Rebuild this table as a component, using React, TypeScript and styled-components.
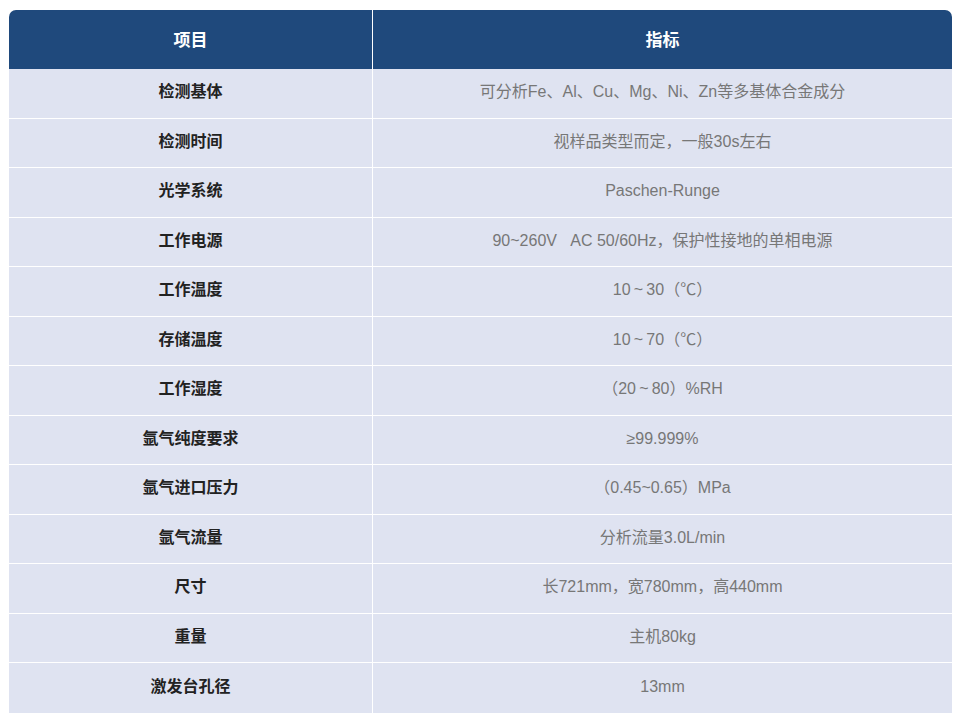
import React from "react";
import styled, { createGlobalStyle } from "styled-components";

const rows: [string, string][] = [
    ["检测基体", "可分析Fe、Al、Cu、Mg、Ni、Zn等多基体合金成分"],
    ["检测时间", "视样品类型而定，一般30s左右"],
    ["光学系统", "Paschen-Runge"],
    ["工作电源", "90~260V\u00a0\u00a0\u00a0AC 50/60Hz，保护性接地的单相电源"],
    ["工作温度", "10\u2009~\u200930（℃）"],
    ["存储温度", "10\u2009~\u200970（℃）"],
    ["工作湿度", "（20\u2009~\u200980）%RH"],
    ["氩气纯度要求", "≥99.999%"],
    ["氩气进口压力", "（0.45~0.65）MPa"],
    ["氩气流量", "分析流量3.0L/min"],
    ["尺寸", "长721mm，宽780mm，高440mm"],
    ["重量", "主机80kg"],
    ["激发台孔径", "13mm"],
];

const GlobalStyle = createGlobalStyle`
    html, body {
        margin: 0;
        padding: 0;
        background: #fff;
        font-family: "Liberation Sans", "Noto Sans CJK SC", sans-serif;
    }
`;

const Page = styled.div`
    padding: 10px 9px;
`;

const Table = styled.div`
    width: 943px;
    display: grid;
    grid-template-columns: 364px 1fr;
    border-radius: 7px 7px 0 0;
    overflow: hidden;
`;

const HeadCell = styled.div<{ $first?: boolean }>`
    height: 59px;
    box-sizing: border-box;
    padding-bottom: 3px;
    display: flex;
    align-items: center;
    justify-content: center;
    background: #1f497c;
    color: #fff;
    font-size: 17px;
    font-weight: 700;
    border-right: ${(p) => (p.$first ? "1px solid #fff" : "none")};
`;

const Cell = styled.div<{ $first?: boolean; $last?: boolean }>`
    height: 49.5px;
    box-sizing: border-box;
    padding-bottom: 3px;
    display: flex;
    align-items: center;
    justify-content: center;
    background: #dfe3f1;
    font-size: 16px;
    line-height: 1.2;
    color: ${(p) => (p.$first ? "#222" : "#777")};
    font-weight: ${(p) => (p.$first ? 700 : 400)};
    border-right: ${(p) => (p.$first ? "1px solid #fff" : "none")};
    border-bottom: ${(p) => (p.$last ? "none" : "1px solid #fff")};
`;

export default function App() {
    return (
        <Page>
            <GlobalStyle />
            <Table>
                <HeadCell $first>项目</HeadCell>
                <HeadCell>指标</HeadCell>
                {rows.map(([name, value], i) => (
                    <React.Fragment key={name}>
                        <Cell $first $last={i === rows.length - 1}>
                            {name}
                        </Cell>
                        <Cell $last={i === rows.length - 1}>{value}</Cell>
                    </React.Fragment>
                ))}
            </Table>
        </Page>
    );
}
